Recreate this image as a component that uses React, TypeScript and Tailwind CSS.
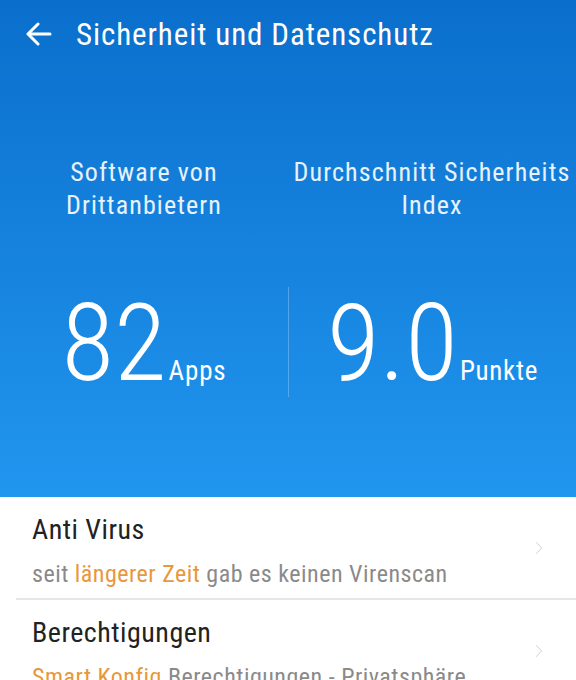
import { ChevronRight } from "lucide-react";

function BackArrow() {
  return (
    <svg width="26" height="24" viewBox="0 0 26 24" fill="none" stroke="white" strokeWidth="3" strokeLinecap="round" strokeLinejoin="round">
      <path d="M24 12H3" />
      <path d="M12 2L2 12l10 10" />
    </svg>
  );
}

function ListItem({ title, children }: { title: string; children: React.ReactNode }) {
  return (
    <div className="flex items-center pl-[32px] pr-[26px]">
      <div className="flex-1 pt-[17px] pb-[9px]">
        <div className="text-[28px] leading-[32px] tracking-[0.5px] text-[#222222]">{title}</div>
        <div className="mt-[13px] text-[24px] leading-[30px] tracking-[0.5px] text-[#8a8a8a] whitespace-nowrap">
          {children}
        </div>
      </div>
      <ChevronRight size={22} strokeWidth={1.1} className="text-[#d6d6d6]" />
    </div>
  );
}

export default function App() {
  return (
    <div className="w-[576px] h-[680px] overflow-hidden bg-white font-['Roboto',sans-serif] [font-stretch:condensed]">
      <div className="h-[497px] bg-linear-to-b from-[#0a6fcc] to-[#2196ef] text-white">
        <div className="h-[68px] flex items-center pl-[26px]">
          <BackArrow />
          <h1 className="ml-[24px] text-[31px] leading-none tracking-[0.9px]">Sicherheit und Datenschutz</h1>
        </div>

        <div className="mt-[88px] grid grid-cols-2 text-center text-[26px] leading-[33px] tracking-[1.1px] text-white/90">
          <div>
            Software von
            <br />
            Drittanbietern
          </div>
          <div className="whitespace-nowrap">
            Durchschnitt Sicherheits
            <br />
            Index
          </div>
        </div>

        <div className="mt-[65px] grid grid-cols-2">
          <div className="h-[110px] pt-[2px] flex justify-center">
            <div className="flex items-baseline h-[108px]">
              <span className="text-[108px] leading-none font-light">82</span>
              <span className="ml-[2px] text-[27px] leading-none tracking-[0.9px]">Apps</span>
            </div>
          </div>
          <div className="h-[110px] pt-[2px] flex justify-center border-l border-white/25">
            <div className="flex items-baseline h-[108px]">
              <span className="text-[108px] leading-none font-light">9.0</span>
              <span className="ml-[2px] text-[27px] leading-none tracking-[0.7px]">Punkte</span>
            </div>
          </div>
        </div>
      </div>

      <ListItem title="Anti Virus">
        seit <span className="text-[#e8973a]">längerer Zeit</span> gab es keinen Virenscan
      </ListItem>
      <div className="ml-[16px] h-[2px] bg-[#e6e6e6]" />
      <ListItem title="Berechtigungen">
        <span className="text-[#e8973a]">Smart Konfig</span> Berechtigungen - Privatsphäre
      </ListItem>
    </div>
  );
}
